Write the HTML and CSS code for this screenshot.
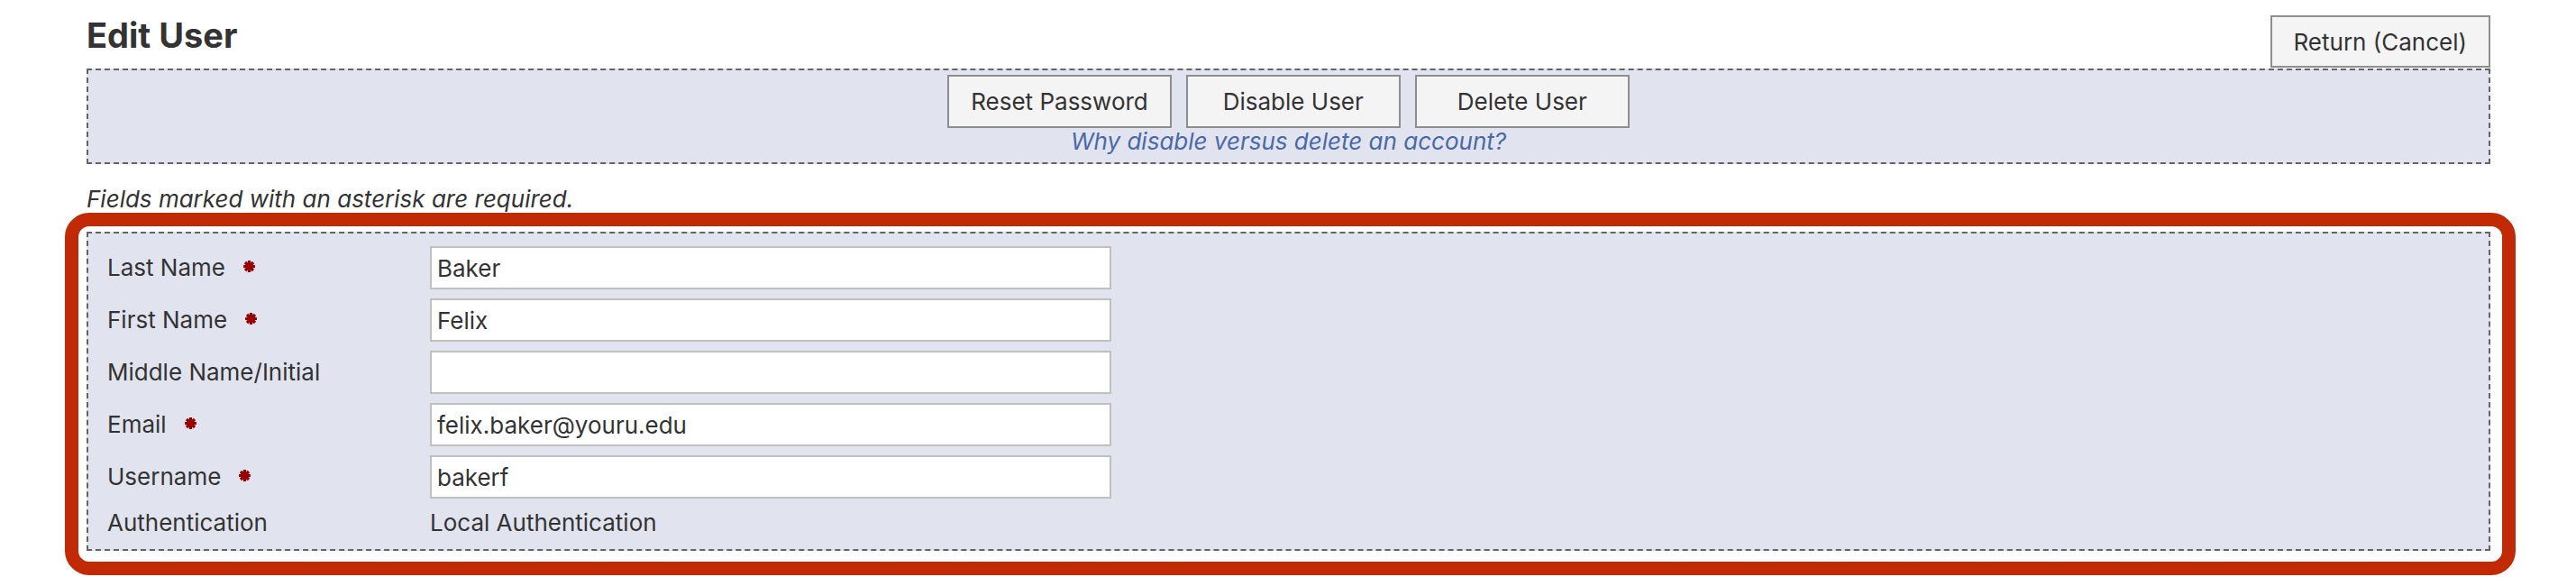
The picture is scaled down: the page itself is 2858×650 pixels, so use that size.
FILE: index.html
```html
<!DOCTYPE html>
<html lang="en">
<head>
  <meta charset="UTF-8" />
  <meta name="viewport" content="width=device-width, initial-scale=1.0" />
  <title>Edit User</title>
  <link rel="stylesheet" href="styles.css">
</head>
<body>
  <div class="pagina">
    <div class="cabecera">
      <h1>Edit User</h1>
      <button class="boton boton-volver">Return (Cancel)</button>
    </div>

    <!-- acciones de la cuenta -->
    <div class="acciones">
      <div class="acciones-botones">
        <button class="boton">Reset Password</button>
        <button class="boton">Disable User</button>
        <button class="boton">Delete User</button>
      </div>
      <a class="acciones-ayuda" href="#">Why disable versus delete an account?</a>
    </div>

    <p class="nota">Fields marked with an asterisk are required.</p>

    <div class="marco">
      <div class="formulario">
        <label class="etiqueta" for="apellido">Last Name
          <svg class="requerido" viewBox="0 0 14 14"><path d="M7 1v12M1 7h12M2.8 2.8l8.4 8.4M11.2 2.8l-8.4 8.4"/></svg>
        </label>
        <input class="campo" id="apellido" type="text" value="Baker" />

        <label class="etiqueta" for="nombre">First Name
          <svg class="requerido" viewBox="0 0 14 14"><path d="M7 1v12M1 7h12M2.8 2.8l8.4 8.4M11.2 2.8l-8.4 8.4"/></svg>
        </label>
        <input class="campo" id="nombre" type="text" value="Felix" />

        <label class="etiqueta" for="segundo">Middle Name/Initial</label>
        <input class="campo" id="segundo" type="text" value="" />

        <label class="etiqueta" for="correo">Email
          <svg class="requerido" viewBox="0 0 14 14"><path d="M7 1v12M1 7h12M2.8 2.8l8.4 8.4M11.2 2.8l-8.4 8.4"/></svg>
        </label>
        <input class="campo" id="correo" type="text" value="felix.baker@youru.edu" />

        <label class="etiqueta" for="usuario">Username
          <svg class="requerido" viewBox="0 0 14 14"><path d="M7 1v12M1 7h12M2.8 2.8l8.4 8.4M11.2 2.8l-8.4 8.4"/></svg>
        </label>
        <input class="campo" id="usuario" type="text" value="bakerf" />

        <span class="etiqueta">Authentication</span>
        <span class="etiqueta">Local Authentication</span>
      </div>
    </div>
  </div>
</body>
</html>
```

FILE: styles.css
```css
body {
  font-family: Inter, "Liberation Sans", sans-serif;
  color: #333;
  background-color: #fff;
  margin: 0;
  padding: 0;
}

.pagina {
  padding: 17px 95px 0 96px;
}

.cabecera {
  display: flex;
  justify-content: space-between;
  align-items: flex-start;
}

.cabecera h1 {
  margin: 0;
  font-size: 38px;
  line-height: 44px;
  font-weight: 700;
  color: #333;
}

.boton {
  font-family: inherit;
  font-size: 26px;
  color: #333;
  background-color: #f4f4f4;
  border: 2px solid #8e8e8e;
  border-radius: 0;
  height: 59px;
  min-width: 238px;
  padding: 0 24px;
  cursor: pointer;
}

.boton-volver {
  height: 58px;
}

.acciones {
  margin-top: 1px;
  border: 2px dashed #646464;
  background-color: #e1e4ee;
  padding: 5px 0 8px;
  text-align: center;
}

.acciones-botones {
  display: flex;
  justify-content: center;
  gap: 16px;
}

.acciones-ayuda {
  display: block;
  font-size: 26px;
  line-height: 30px;
  font-style: italic;
  color: #4a69a8;
  text-decoration: none;
}

.nota {
  margin: 24px 0 0;
  font-size: 26px;
  line-height: 30px;
  font-style: italic;
  color: #333;
}

/* recuadro rojo alrededor del formulario */
.marco {
  margin: 0 -28px 0 -24px;
  border: 15px solid #c22a05;
  border-radius: 27px;
  padding: 6px 13px 12px 9px;
}

.formulario {
  display: grid;
  grid-template-columns: 358px 756px;
  row-gap: 10px;
  align-items: center;
  border: 2px dashed #646464;
  background-color: #e1e4ee;
  padding: 14px 21px 12px;
}

.etiqueta {
  display: flex;
  align-items: center;
  font-size: 26px;
  line-height: 34px;
  color: #333;
}

.requerido {
  width: 15px;
  height: 15px;
  margin-left: 19px;
  margin-bottom: 4px;
  fill: none;
  stroke: #990000;
  stroke-width: 3;
}

.campo {
  box-sizing: border-box;
  width: 756px;
  height: 48px;
  border: 2px solid #c0c0c0;
  border-radius: 0;
  padding: 0 6px;
  font-family: inherit;
  font-size: 26px;
  color: #333;
  background-color: #fff;
  outline: none;
}
```
